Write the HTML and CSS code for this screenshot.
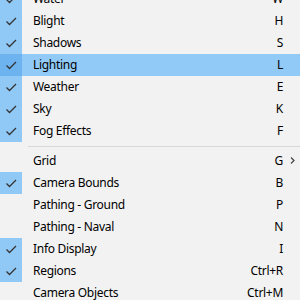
FILE: index.html
```html
<!DOCTYPE html>
<html lang="en">
<head>
    <meta charset="UTF-8">
    <title>View Menu</title>
    <link rel="stylesheet" href="styles.css">
</head>
<body>
    <div class="menu">
        <div class="item checked"><span class="check"></span><span class="label">Water</span><span class="key">W</span><span class="arrow"></span></div>
        <div class="item checked"><span class="check"></span><span class="label">Blight</span><span class="key">H</span><span class="arrow"></span></div>
        <div class="item checked"><span class="check"></span><span class="label">Shadows</span><span class="key">S</span><span class="arrow"></span></div>
        <div class="item checked active"><span class="check"></span><span class="label">Lighting</span><span class="key">L</span><span class="arrow"></span></div>
        <div class="item checked"><span class="check"></span><span class="label">Weather</span><span class="key">E</span><span class="arrow"></span></div>
        <div class="item checked"><span class="check"></span><span class="label">Sky</span><span class="key">K</span><span class="arrow"></span></div>
        <div class="item checked"><span class="check"></span><span class="label">Fog Effects</span><span class="key">F</span><span class="arrow"></span></div>
        <div class="separator"></div>
        <div class="item"><span class="check"></span><span class="label">Grid</span><span class="key">G</span><span class="arrow">
            <svg width="5" height="7" viewBox="0 0 5 7"><path d="M1 0.5 L4 3.5 L1 6.5" fill="none" stroke="#444" stroke-width="1.2"/></svg>
        </span></div>
        <div class="item checked"><span class="check"></span><span class="label">Camera Bounds</span><span class="key">B</span><span class="arrow"></span></div>
        <div class="item"><span class="check"></span><span class="label">Pathing - Ground</span><span class="key">P</span><span class="arrow"></span></div>
        <div class="item"><span class="check"></span><span class="label">Pathing - Naval</span><span class="key">N</span><span class="arrow"></span></div>
        <div class="item checked"><span class="check"></span><span class="label">Info Display</span><span class="key">I</span><span class="arrow"></span></div>
        <div class="item checked"><span class="check"></span><span class="label">Regions</span><span class="key">Ctrl+R</span><span class="arrow"></span></div>
        <div class="item"><span class="check"></span><span class="label">Camera Objects</span><span class="key">Ctrl+M</span><span class="arrow"></span></div>
    </div>
    <script>
        // draw the tick into every checked row
        var tick = '<svg width="22" height="22" viewBox="0 0 22 22"><path d="M6.5 11.5 L9.5 14.5 L16 8" fill="none" stroke="#333" stroke-width="1.3"/></svg>';
        document.querySelectorAll(".item.checked .check").forEach(function (el) {
            el.innerHTML = tick;
        });
    </script>
</body>
</html>
```
FILE: styles.css
```css
body {
    margin: 0;
    padding: 0;
    background-color: #f2f2f2;
    font-family: "Noto Sans", "Open Sans", sans-serif;
    font-size: 12px;
    letter-spacing: -0.3px;
    color: #000;
    overflow: hidden;
}
.menu {
    margin-top: -12px;
}
.item {
    display: grid;
    grid-template-columns: 22px 1fr auto 17px;
    height: 22px;
    line-height: 21px;
    align-items: start;
}
.check {
    height: 22px;
    display: block;
}
.check svg {
    display: block;
}
.item.checked .check {
    background: #90c8f6;
}
.item.active {
    background: #91c9f7;
}
.item.active .check {
    background: #6cb3f0;
}
.label {
    padding-left: 11px;
    white-space: nowrap;
}
.key {
    text-align: right;
}
.arrow {
    display: flex;
    justify-content: center;
    padding-left: 2px;
    padding-top: 7px;
}
.arrow svg {
    display: block;
}
.separator {
    height: 8px;
    margin-left: 28px;
    box-sizing: border-box;
    padding-top: 4px;
}
.separator::before {
    content: "";
    display: block;
    border-top: 1px solid #d7d7d7;
}
```
